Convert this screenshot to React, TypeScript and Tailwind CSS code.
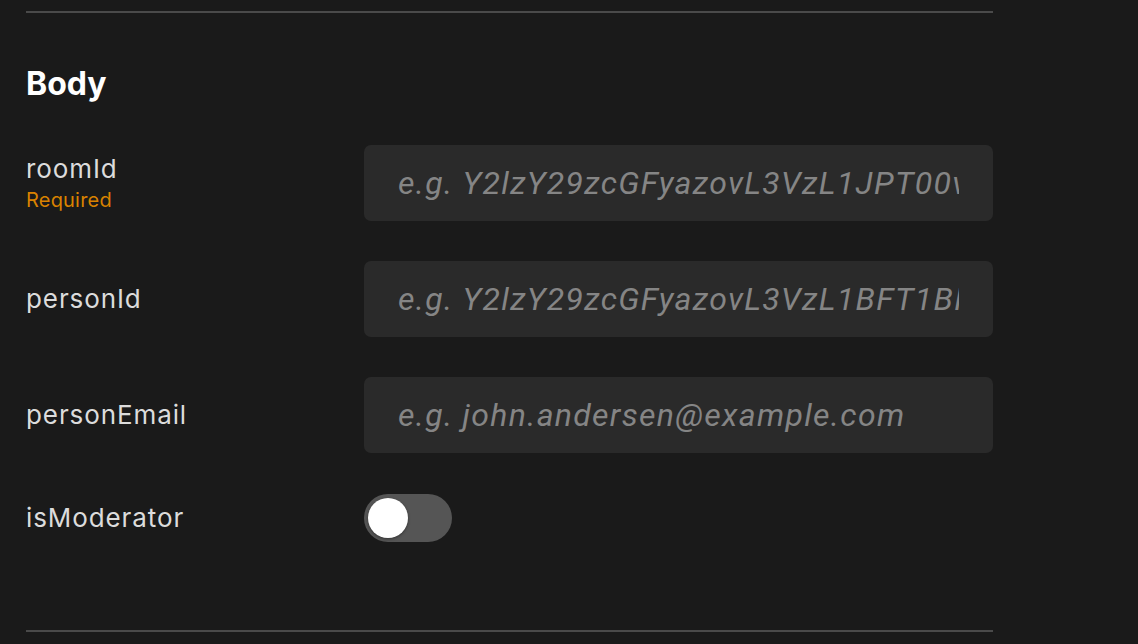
import { useState } from "react";

const fields = [
  { name: "roomId", required: true, placeholder: "e.g. Y2lzY29zcGFyazovL3VzL1JPT00vYmJjZWIxYWQtNDNmMS0zYjU4LTkxNDctZjE0YmIwYzRkMTU0" },
  { name: "personId", required: false, placeholder: "e.g. Y2lzY29zcGFyazovL3VzL1BFT1BMRS9mMGUxZTQ1Ni1hNTVkLTQ1ZmMtYjE5Yi1lMDZlNDAxZTk0ZGY" },
  { name: "personEmail", required: false, placeholder: "e.g. john.andersen@example.com" },
];

export default function App() {
  const [moderator, setModerator] = useState(false);

  return (
    <div className="min-h-[644px] w-full bg-[#1a1a1a] font-['Inter',sans-serif] pt-[11px] pl-[26px]">
      <div className="w-[967px]">
        <div className="h-[2px] bg-[#4a4a4a]" />
        <h2 className="mt-[53px] text-[32px] font-bold leading-[36px] text-white">Body</h2>
        <div className="mt-[43px] flex flex-col gap-[40px]">
          {fields.map((f) => (
            <div key={f.name} className="grid grid-cols-[338px_1fr] items-center">
              <div className="flex flex-col">
                <span className={`text-[26px] tracking-[0.9px] text-[#dcdcdc] ${f.required ? "leading-[34px]" : "leading-[28px]"}`}>{f.name}</span>
                {f.required && (
                  <span className="text-[20px] leading-[28px] tracking-[0.2px] text-[#d98200]">Required</span>
                )}
              </div>
              <input
                className="h-[76px] w-full rounded-[7px] bg-[#2a2a2a] px-[34px] font-['Roboto',sans-serif] text-[32px] italic tracking-[1.3px] text-[#e0e0e0] placeholder:text-[#858585] outline-none"
                placeholder={f.placeholder}
              />
            </div>
          ))}
          <div className="mt-[1px] grid grid-cols-[338px_1fr] items-center">
            <span className="text-[26px] leading-[28px] tracking-[0.9px] text-[#dcdcdc]">isModerator</span>
            <button
              onClick={() => setModerator(!moderator)}
              className={`flex h-[48px] w-[88px] items-center rounded-full p-[4px] ${moderator ? "bg-[#2f9e5b] justify-end" : "bg-[#555555] justify-start"}`}
            >
              <span className="h-[40px] w-[40px] rounded-full bg-white shadow-[0_1px_3px_rgba(0,0,0,0.4)]" />
            </button>
          </div>
        </div>
        <div className="mt-[88px] h-[2px] bg-[#4a4a4a]" />
      </div>
    </div>
  );
}
